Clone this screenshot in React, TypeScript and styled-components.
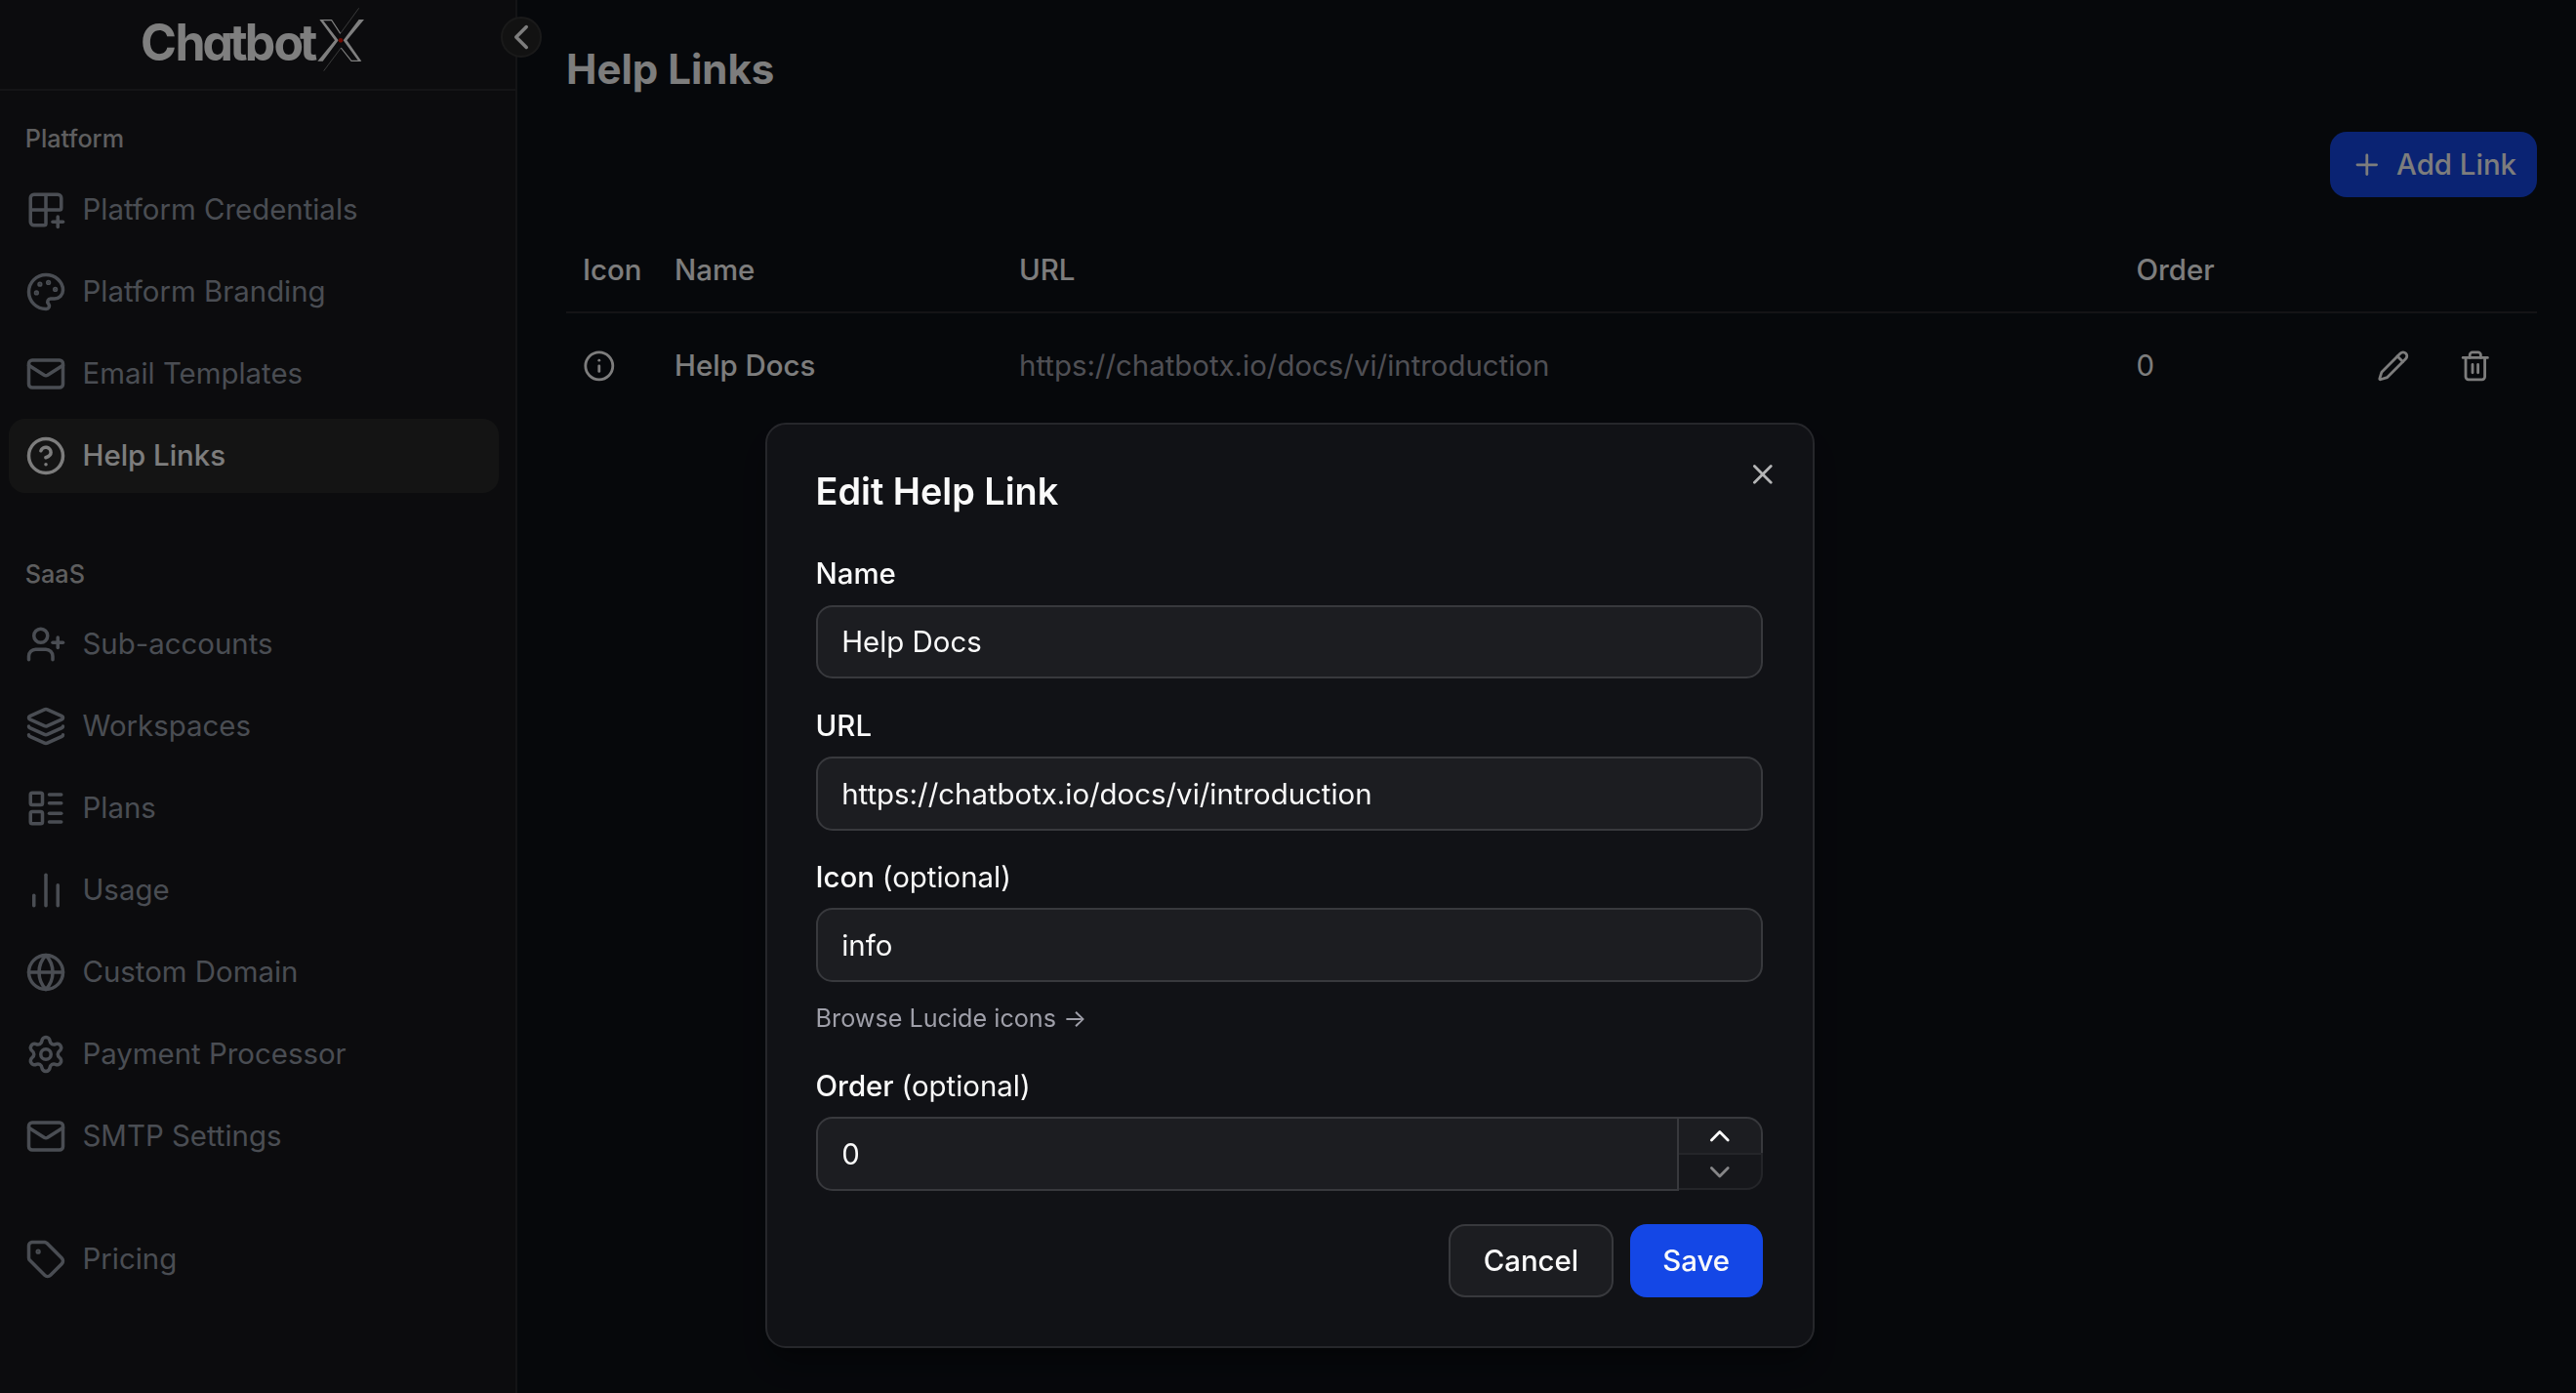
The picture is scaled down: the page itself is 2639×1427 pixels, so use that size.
import React from "react";
import styled, { createGlobalStyle } from "styled-components";
import {
  ChartNoAxesColumn,
  ChevronDown,
  ChevronLeft,
  ChevronUp,
  CircleQuestionMark,
  Globe,
  Grid2x2Plus,
  Info,
  Layers,
  LayoutList,
  Mail,
  Palette,
  Pencil,
  Plus,
  Settings,
  Tag,
  Trash2,
  UserPlus,
  X,
} from "lucide-react";
import type { LucideIcon } from "lucide-react";

const color = {
  page: "#0d1017",
  sidebar: "#18191c",
  sidebarActive: "#292929",
  line: "#28292c",
  text: "#fafafa",
  navText: "#949ba6",
  label: "#bdbdbf",
  muted: "#9f9fa9",
  primary: "#1447e6",
  dialog: "#111216",
  dialogLine: "#26272b",
  field: "#1c1d21",
  fieldLine: "#38393d",
};

const GlobalStyle = createGlobalStyle`
  *, *::before, *::after { box-sizing: border-box; }
  html, body { margin: 0; padding: 0; background: #07080b; }
  body {
    font-family: Inter, "Liberation Sans", sans-serif;
    font-size: 29.4px;
    line-height: 42px;
    color: ${color.text};
    overflow: hidden;
  }
  button, input { font: inherit; color: inherit; margin: 0; }
  button { cursor: pointer; }
  svg { display: block; flex-shrink: 0; }
`;

const Shell = styled.div`
  display: grid;
  grid-template-columns: 530px 1fr;
  height: 1427px;
  background: ${color.page};
`;

/* Sidebar */

const Sidebar = styled.aside`
  position: relative;
  display: flex;
  flex-direction: column;
  background: ${color.sidebar};
  border-right: 2px solid ${color.line};
`;

const Brand = styled.div`
  display: flex;
  align-items: flex-start;
  height: 93px;
  padding-left: 135px;
  border-bottom: 2px solid ${color.line};
`;

const Wordmark = styled.text`
  fill: #fff;
  font-family: Inter, "Liberation Sans", sans-serif;
  font-size: 52px;
  font-weight: 700;
  font-feature-settings: "cv11" 1;
`;

const CollapseButton = styled.button`
  position: absolute;
  top: 17px;
  right: -27px;
  display: flex;
  align-items: center;
  justify-content: center;
  width: 42px;
  height: 42px;
  padding: 0;
  border: 2px solid #343434;
  border-radius: 50%;
  background: #252525;
`;

const Nav = styled.nav`
  display: flex;
  flex-direction: column;
  padding: 17px 17px 0 9px;
`;

const NavGroup = styled.section`
  display: flex;
  flex-direction: column;
  gap: 8.4px;
  margin-bottom: 50.4px;
`;

const GroupLabel = styled.h2<{ $follows?: boolean }>`
  display: flex;
  align-items: center;
  height: 63px;
  margin: 0 0 -4.4px;
  padding: ${(p) => (p.$follows ? 3 : 0)}px 0 0 16.8px;
  font-size: 25.2px;
  font-weight: 500;
  color: ${color.label};
`;

const NavItem = styled.a<{ $active?: boolean }>`
  display: flex;
  align-items: center;
  gap: 16.5px;
  height: 75.6px;
  padding-left: 17px;
  border-radius: 16.8px;
  background: ${(p) => (p.$active ? color.sidebarActive : "transparent")};
  color: ${(p) => (p.$active ? color.text : color.navText)};
  font-weight: ${(p) => (p.$active ? 500 : 400)};
`;

/* Main area */

const Main = styled.main`
  display: flex;
  flex-direction: column;
  padding: 42px 40px 0 50px;
`;

const PageTitle = styled.h1`
  margin: 0;
  font-size: 42px;
  line-height: 58px;
  font-weight: 700;
`;

const Toolbar = styled.div`
  display: flex;
  justify-content: flex-end;
  margin-top: 35px;
`;

const AddButton = styled.button`
  display: flex;
  align-items: center;
  gap: 13px;
  height: 67px;
  padding: 0 21px;
  border: 0;
  border-radius: 17px;
  background: ${color.primary};
  font-weight: 500;
`;

const Table = styled.div`
  margin-top: 33px;
`;

const Row = styled.div<{ $head?: boolean }>`
  display: grid;
  grid-template-columns: 94px 353px 1144.5px 1fr auto;
  align-items: center;
  height: ${(p) => (p.$head ? 86 : 108)}px;
  border-bottom: ${(p) => (p.$head ? `2px solid ${color.line}` : "0")};
  font-weight: ${(p) => (p.$head ? 500 : 400)};
`;

const Cell = styled.div<{ $muted?: boolean; $strong?: boolean }>`
  padding-left: 17px;
  color: ${(p) => (p.$muted ? color.muted : "inherit")};
  font-weight: ${(p) => (p.$strong ? 500 : "inherit")};
`;

const RowActions = styled.div`
  display: flex;
  gap: 8.4px;
  padding-right: 25.5px;
`;

const GhostButton = styled.button`
  display: grid;
  place-items: center;
  width: 75.6px;
  height: 75.6px;
  padding: 0;
  border: 0;
  background: none;
`;

/* Dialog */

const Overlay = styled.div`
  position: fixed;
  inset: 0;
  background: rgba(0, 0, 0, 0.5);
`;

const Dialog = styled.form`
  position: absolute;
  top: 433px;
  left: 784px;
  display: flex;
  flex-direction: column;
  gap: 33.6px;
  width: 1075px;
  height: 948px;
  padding: 50px 51.4px 50px 49.6px;
  border: 2px solid ${color.dialogLine};
  border-radius: 21px;
  background: ${color.dialog};
  box-shadow: 0 21px 31px -6px rgba(0, 0, 0, 0.3), 0 8px 12px -8px rgba(0, 0, 0, 0.3);
`;

const DialogTitle = styled.h2`
  margin: 0 0 17px;
  font-size: 37.8px;
  line-height: 37.8px;
  font-weight: 600;
`;

const CloseButton = styled.button`
  position: absolute;
  top: 33.5px;
  right: 34px;
  padding: 0;
  border: 0;
  background: none;
  opacity: 0.7;
`;

const Field = styled.div`
  display: flex;
  flex-direction: column;
  gap: 16.8px;
`;

const Label = styled.label`
  margin-bottom: -0.6px;
  line-height: 30px;
  font-weight: 500;
`;

const Optional = styled.span`
  font-weight: 400;
`;

const Input = styled.input<{ $joined?: boolean }>`
  flex: 1 1 auto;
  width: 100%;
  min-width: 0;
  height: 75.6px;
  padding: 0.5px 24.6px 0;
  border: 2px solid ${color.fieldLine};
  border-radius: ${(p) => (p.$joined ? "16.8px 0 0 16.8px" : "16.8px")};
  background: ${color.field};
  outline: none;
`;

const HintLink = styled.a`
  height: 41.8px;
  font-size: 25.2px;
  line-height: 41px;
  color: ${color.muted};
`;

const NumberField = styled.div`
  display: flex;
`;

const Stepper = styled.div`
  display: flex;
  flex-direction: column;
  flex: 0 0 86px;
  height: 75px;
`;

const StepButton = styled.button<{ $dir: "up" | "down" }>`
  display: flex;
  align-items: center;
  justify-content: center;
  height: ${(p) => (p.$dir === "up" ? 37 : 38)}px;
  padding: 0;
  border: 2px solid ${color.fieldLine};
  border-left: 0;
  border-bottom-width: ${(p) => (p.$dir === "up" ? 0 : 2)}px;
  border-radius: ${(p) => (p.$dir === "up" ? "0 16.8px 0 0" : "0 0 16.8px 0")};
  background: ${color.field};
  opacity: ${(p) => (p.$dir === "up" ? 1 : 0.5)};
`;

const Footer = styled.div`
  display: flex;
  justify-content: flex-end;
  gap: 16.8px;
`;

const Button = styled.button<{ $primary?: boolean }>`
  height: 75.6px;
  padding: 1px 33.6px 0;
  border: ${(p) => (p.$primary ? "0" : `2px solid ${color.fieldLine}`)};
  border-radius: 17px;
  background: ${(p) => (p.$primary ? color.primary : color.field)};
  font-weight: 500;
`;

const Logo = () => (
  <svg width="250" height="90" viewBox="0 0 250 90" aria-label="ChatbotX">
    <Wordmark transform="scale(0.96 1)" x="9.3 46.4 75.5 104.5 120.7 151.7 179.2" y="62.3">
      Chatbot
    </Wordmark>
    <g transform="scale(0.33333)">
      <path fill="#fff" d="M577 60h9L635 124 587 188H571L624 124ZM714 60H698L650 124 697 188h9L661 124Z" />
      <path
        fill="none"
        stroke="#fff"
        strokeWidth="3.5"
        d="M580 62H614L641 103M703 187H675L643 147"
      />
      <path fill="none" stroke="#fff" strokeWidth="2" opacity="0.6" d="M641 103 698 25M643 147 590 218" />
      <circle cx="642" cy="124" r="7" fill="#e01200" />
    </g>
  </svg>
);

type NavEntry = { icon: LucideIcon; label: string; active?: boolean };

const platformItems: NavEntry[] = [
  { icon: Grid2x2Plus, label: "Platform Credentials" },
  { icon: Palette, label: "Platform Branding" },
  { icon: Mail, label: "Email Templates" },
  { icon: CircleQuestionMark, label: "Help Links", active: true },
];

const saasItems: NavEntry[] = [
  { icon: UserPlus, label: "Sub-accounts" },
  { icon: Layers, label: "Workspaces" },
  { icon: LayoutList, label: "Plans" },
  { icon: ChartNoAxesColumn, label: "Usage" },
  { icon: Globe, label: "Custom Domain" },
  { icon: Settings, label: "Payment Processor" },
  { icon: Mail, label: "SMTP Settings" },
];

const pricingItems: NavEntry[] = [{ icon: Tag, label: "Pricing" }];

const NavList = ({ items }: { items: NavEntry[] }) => (
  <>
    {items.map(({ icon: Icon, label, active }) => (
      <NavItem key={label} $active={active}>
        <Icon size={42} strokeWidth={2} />
        {label}
      </NavItem>
    ))}
  </>
);

const App = () => (
  <>
    <GlobalStyle />
    <Shell>
      <Sidebar>
        <Brand>
          <Logo />
        </Brand>
        <CollapseButton aria-label="Collapse sidebar">
          <ChevronLeft size={42} strokeWidth={2} />
        </CollapseButton>
        <Nav>
          <NavGroup>
            <GroupLabel>Platform</GroupLabel>
            <NavList items={platformItems} />
          </NavGroup>
          <NavGroup>
            <GroupLabel $follows>SaaS</GroupLabel>
            <NavList items={saasItems} />
          </NavGroup>
          <NavGroup>
            <NavList items={pricingItems} />
          </NavGroup>
        </Nav>
      </Sidebar>
      <Main>
        <PageTitle>Help Links</PageTitle>
        <Toolbar>
          <AddButton>
            <Plus size={33.6} strokeWidth={2} />
            Add Link
          </AddButton>
        </Toolbar>
        <Table>
          <Row $head>
            <Cell>Icon</Cell>
            <Cell>Name</Cell>
            <Cell>URL</Cell>
            <Cell>Order</Cell>
          </Row>
          <Row>
            <Cell>
              <Info size={33.6} strokeWidth={2} />
            </Cell>
            <Cell $strong>Help Docs</Cell>
            <Cell $muted>https://chatbotx.io/docs/vi/introduction</Cell>
            <Cell>0</Cell>
            <RowActions>
              <GhostButton aria-label="Edit">
                <Pencil size={33.6} strokeWidth={2} />
              </GhostButton>
              <GhostButton aria-label="Delete">
                <Trash2 size={33.6} strokeWidth={2} />
              </GhostButton>
            </RowActions>
          </Row>
        </Table>
      </Main>
    </Shell>
    <Overlay>
      <Dialog onSubmit={(e) => e.preventDefault()}>
        <DialogTitle>Edit Help Link</DialogTitle>
        <CloseButton type="button" aria-label="Close">
          <X size={33.6} strokeWidth={2} />
        </CloseButton>
        <Field>
          <Label>Name</Label>
          <Input defaultValue="Help Docs" />
        </Field>
        <Field>
          <Label>URL</Label>
          <Input defaultValue="https://chatbotx.io/docs/vi/introduction" />
        </Field>
        <Field>
          <Label>
            Icon <Optional>(optional)</Optional>
          </Label>
          <Input defaultValue="info" />
          <HintLink>Browse Lucide icons →</HintLink>
        </Field>
        <Field>
          <Label>
            Order <Optional>(optional)</Optional>
          </Label>
          <NumberField>
            <Input $joined defaultValue="0" />
            <Stepper>
              <StepButton type="button" $dir="up" aria-label="Increase">
                <ChevronUp size={33.6} strokeWidth={2} />
              </StepButton>
              <StepButton type="button" $dir="down" aria-label="Decrease">
                <ChevronDown size={33.6} strokeWidth={2} />
              </StepButton>
            </Stepper>
          </NumberField>
        </Field>
        <Footer>
          <Button type="button">Cancel</Button>
          <Button $primary>Save</Button>
        </Footer>
      </Dialog>
    </Overlay>
  </>
);

export default App;
